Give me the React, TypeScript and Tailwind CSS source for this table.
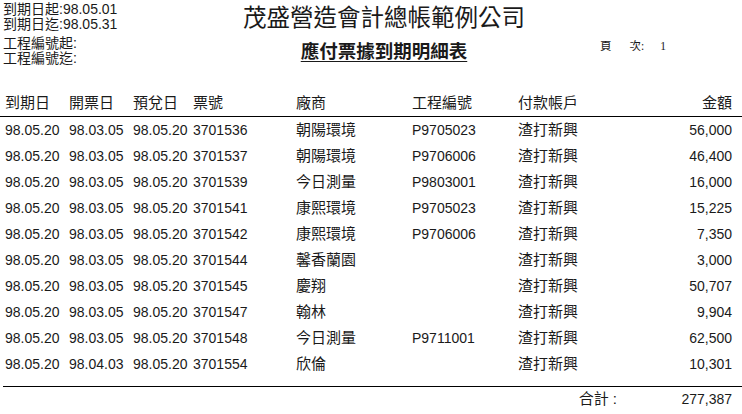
const rows = [
  ["98.05.20", "98.03.05", "98.05.20", "3701536", "朝陽環境", "P9705023", "渣打新興", "56,000"],
  ["98.05.20", "98.03.05", "98.05.20", "3701537", "朝陽環境", "P9706006", "渣打新興", "46,400"],
  ["98.05.20", "98.03.05", "98.05.20", "3701539", "今日測量", "P9803001", "渣打新興", "16,000"],
  ["98.05.20", "98.03.05", "98.05.20", "3701541", "康熙環境", "P9705023", "渣打新興", "15,225"],
  ["98.05.20", "98.03.05", "98.05.20", "3701542", "康熙環境", "P9706006", "渣打新興", "7,350"],
  ["98.05.20", "98.03.05", "98.05.20", "3701544", "馨香蘭園", "", "渣打新興", "3,000"],
  ["98.05.20", "98.03.05", "98.05.20", "3701545", "慶翔", "", "渣打新興", "50,707"],
  ["98.05.20", "98.03.05", "98.05.20", "3701547", "翰林", "", "渣打新興", "9,904"],
  ["98.05.20", "98.03.05", "98.05.20", "3701548", "今日測量", "P9711001", "渣打新興", "62,500"],
  ["98.05.20", "98.04.03", "98.05.20", "3701554", "欣倫", "", "渣打新興", "10,301"],
];

const headers = ["到期日", "開票日", "預兌日", "票號", "廠商", "工程編號", "付款帳戶"];

const cols = "grid grid-cols-[64px_64px_60px_103px_116px_106px_100px_1fr] pl-[5px] pr-[10px]";

export default function App() {
  return (
    <div className="w-[742px] h-[414px] overflow-hidden bg-white text-[#1a1a1a] font-['Liberation_Sans','Noto_Sans_CJK_TC',sans-serif] text-[14px]">
      <div className="flex h-[90px]">
        <div className="w-[200px] shrink-0 pl-[3px] pt-[2px] leading-[15px]">
          <div>到期日起:98.05.01</div>
          <div>到期日迄:98.05.31</div>
          <div className="mt-[4px]">工程編號起:</div>
          <div>工程編號迄:</div>
        </div>
        <div className="flex-1 flex flex-col items-center">
          <div className="text-[23.5px] leading-[28px] mt-[4px]">茂盛營造會計總帳範例公司</div>
          <div className="mt-[10px] text-[18.5px] leading-[20px] font-bold underline underline-offset-[3px] decoration-1">
            應付票據到期明細表
          </div>
        </div>
        <div className="w-[174px] shrink-0 pt-[39px] pl-[32px] flex text-[11.5px] leading-[14px] font-['Liberation_Serif','Noto_Sans_CJK_TC',serif]">
          <span>頁</span>
          <span className="ml-[18px]">次:</span>
          <span className="ml-[16px]">1</span>
        </div>
      </div>

      <div className={`${cols} h-[27px] items-center border-b border-black text-[15px]`}>
        {headers.map((h) => (
          <div key={h}>{h}</div>
        ))}
        <div className="text-right">金額</div>
      </div>

      {rows.map((r, i) => (
        <div key={i} className={`${cols} h-[26px] items-center`}>
          <div>{r[0]}</div>
          <div>{r[1]}</div>
          <div>{r[2]}</div>
          <div>{r[3]}</div>
          <div className="text-[15px]">{r[4]}</div>
          <div>{r[5]}</div>
          <div className="text-[15px]">{r[6]}</div>
          <div className="text-right">{r[7]}</div>
        </div>
      ))}

      <div className="mt-[9px] ml-[3px] border-t border-black flex justify-end pr-[10px] h-[26px] items-center">
        <span className="text-[15px]">合計 :</span>
        <span className="w-[115px] text-right">277,387</span>
      </div>
    </div>
  );
}
